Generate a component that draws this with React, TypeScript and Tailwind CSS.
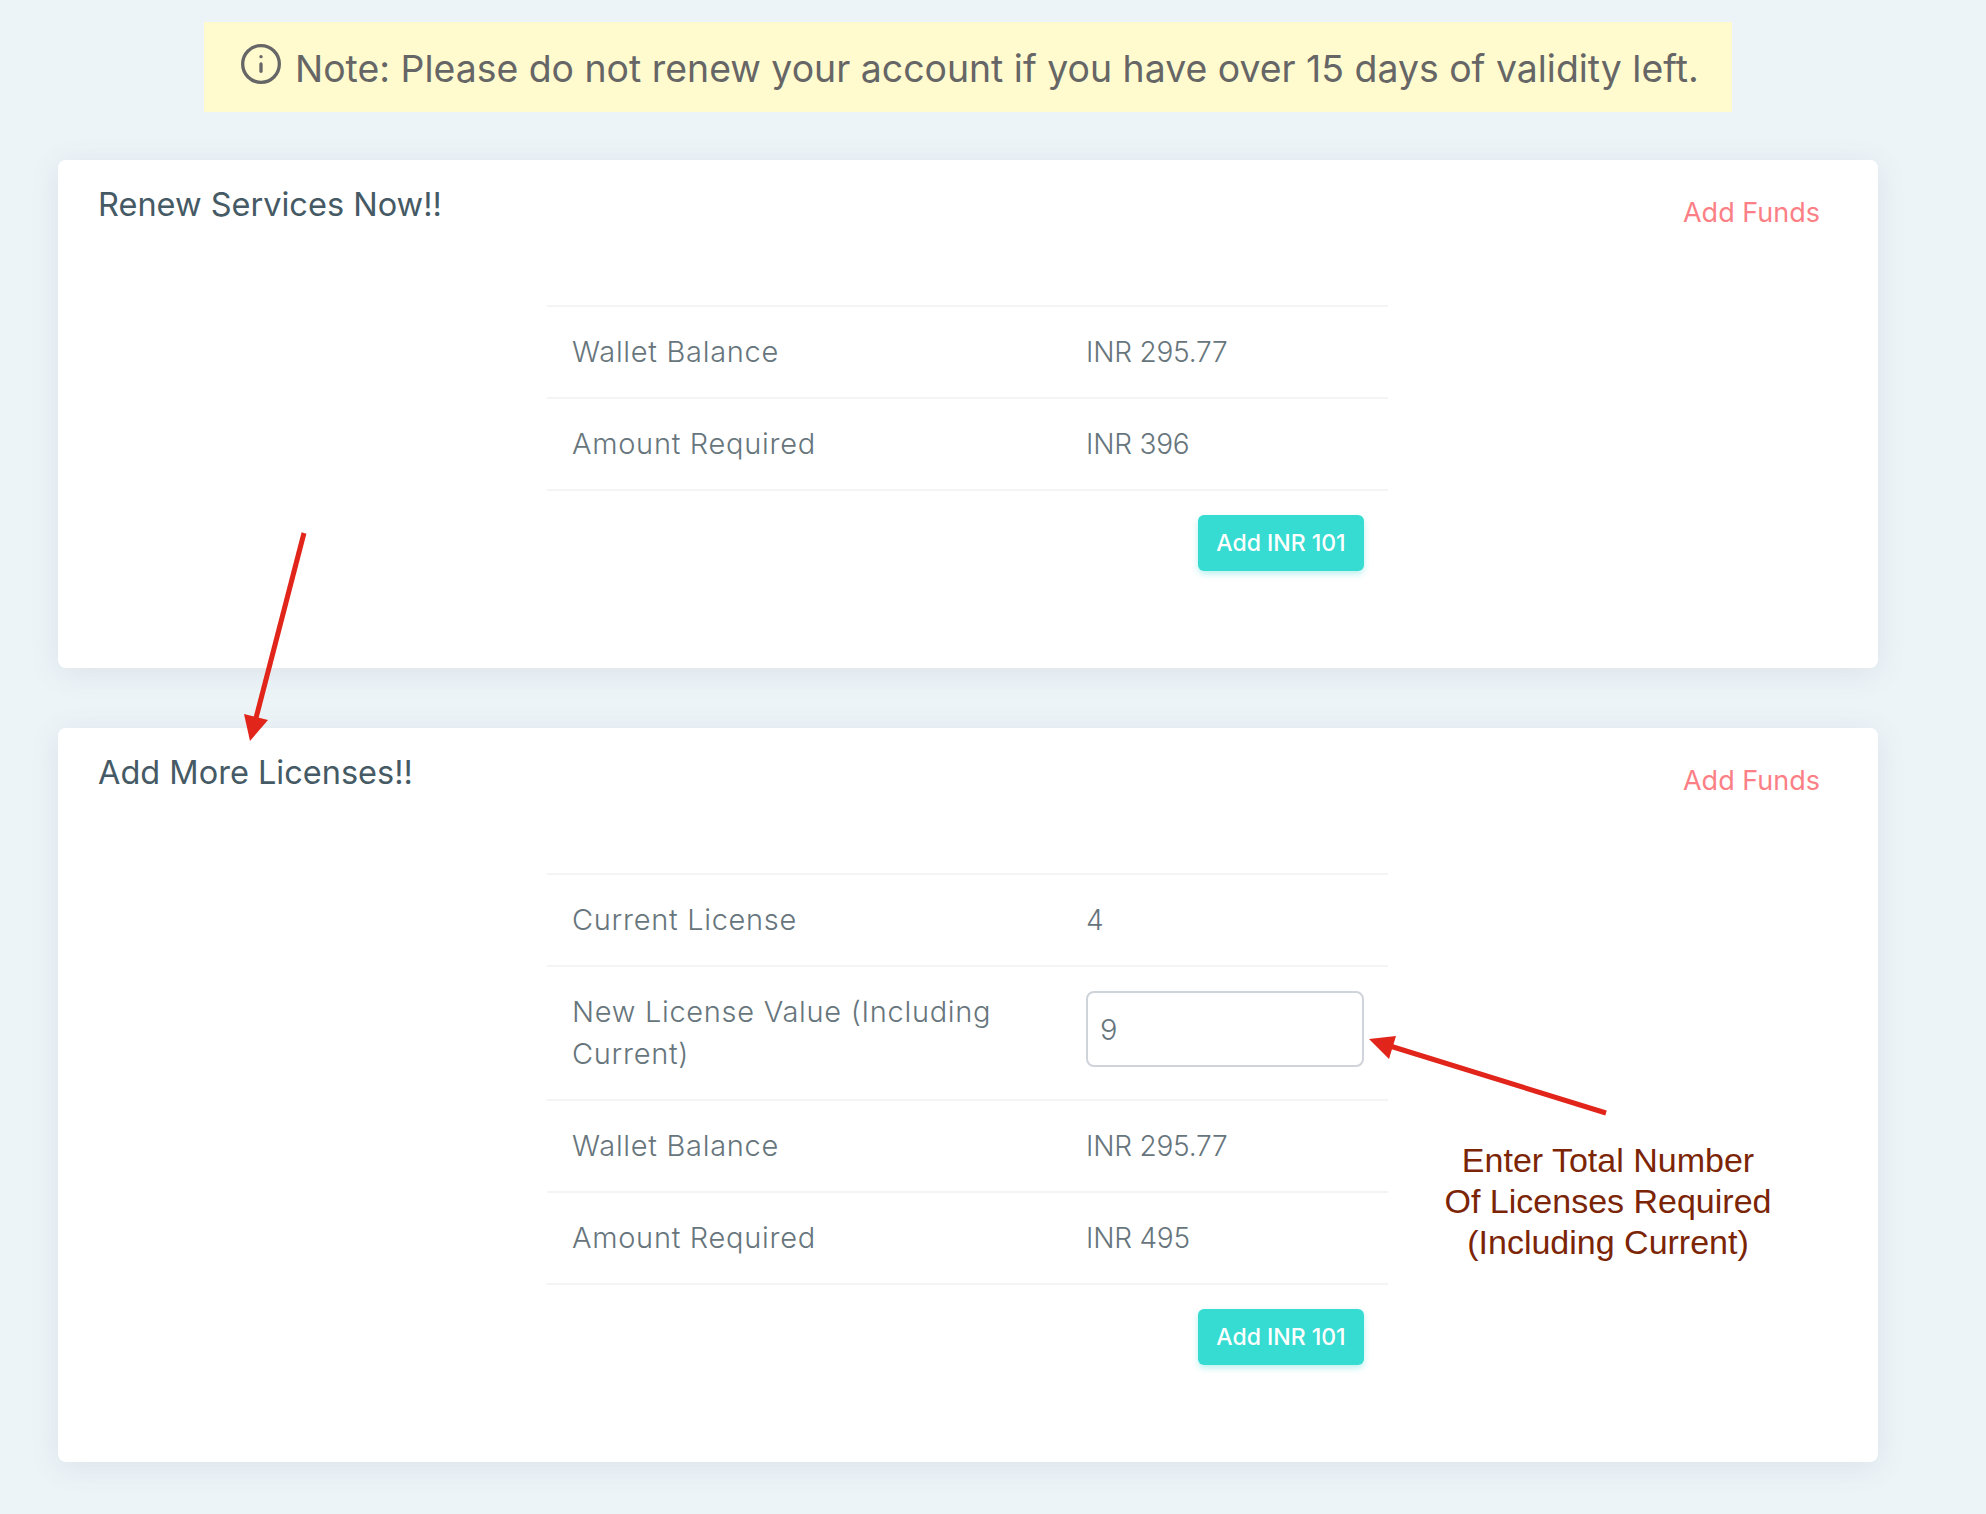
import { Info } from "lucide-react";

function Row({ label, value }: { label: string; value: React.ReactNode }) {
  return (
    <div className="grid grid-cols-[514px_1fr] border-b-2 border-[#f2f4f5] pr-[24px] pl-[25px] py-[24px] text-[28px] leading-[42px] font-light tracking-[-0.2px] text-[#67757c]">
      <div className="pr-[60px] text-[29px] tracking-[0.7px]">{label}</div>
      <div>{value}</div>
    </div>
  );
}

function Card({
  title,
  className,
  children,
}: {
  title: string;
  className: string;
  children: React.ReactNode;
}) {
  return (
    <section
      className={`ml-[58px] w-[1820px] rounded-[8px] bg-white shadow-[0_5px_30px_rgba(90,100,110,0.11)] ${className}`}
    >
      <div className="flex justify-between pr-[58px] pl-[40px] pt-[25px]">
        <h2 className="text-[32.5px] leading-[40px] font-normal text-[#455a64]">{title}</h2>
        <a className="mt-[8px] text-[27px] leading-[40px] text-[#fc7f86]">Add Funds</a>
      </div>
      <div className="mt-[72px] ml-[489px] w-[841px]">
        <div className="border-t-2 border-[#f2f4f5]">{children}</div>
        <div className="mt-[24px] flex justify-end pr-[24px]">
          <button className="h-[56px] w-[166px] rounded-[6px] bg-[#36dbd1] text-[23px] font-medium text-white shadow-[0_3px_6px_rgba(54,219,209,0.35)]">
            Add INR 101
          </button>
        </div>
      </div>
    </section>
  );
}

export default function App() {
  return (
    <div className="relative h-[1514px] w-[1986px] overflow-hidden bg-[#ecf4f8] pt-[22px] font-['Inter',sans-serif]">
      <div className="ml-[204px] flex h-[90px] w-[1528px] items-center gap-[12px] bg-[#fffbcf] pl-[35px] text-[37.4px] leading-[48px] text-[#666666]">
        <Info className="mb-[6px] shrink-0" size={44} strokeWidth={1.8} />
        <span className="mt-[4px] whitespace-nowrap">Note: Please do not renew your account if you have over 15 days of validity left.</span>
      </div>

      <Card title="Renew Services Now!!" className="mt-[48px] h-[508px]">
        <Row label="Wallet Balance" value="INR 295.77" />
        <Row label="Amount Required" value="INR 396" />
      </Card>

      <Card title="Add More Licenses!!" className="mt-[60px] h-[734px]">
        <Row label="Current License" value="4" />
        <Row
          label="New License Value (Including Current)"
          value={
            <input
              readOnly
              value="9"
              className="h-[76px] w-[278px] rounded-[8px] border-2 border-[#ced4da] bg-white px-[12px] text-[29px] font-light text-[#67757c] outline-none"
            />
          }
        />
        <Row label="Wallet Balance" value="INR 295.77" />
        <Row label="Amount Required" value="INR 495" />
      </Card>

      {/* annotations drawn on top of the screenshot */}
      <svg className="pointer-events-none absolute top-0 left-0" width="1986" height="1514">
        <line x1="304" y1="533" x2="256" y2="718" stroke="#e1251b" strokeWidth="5" />
        <polygon points="250,741 244,714 268,720" fill="#e1251b" />
        <line x1="1606" y1="1113" x2="1390" y2="1046" stroke="#e1251b" strokeWidth="5" />
        <polygon points="1369,1039 1396,1036 1389,1059" fill="#e1251b" />
      </svg>
      <div className="absolute top-[1140px] left-[1408px] w-[400px] text-center font-['Liberation_Sans',sans-serif] text-[34px] leading-[41px] text-[#7b2506]">
        Enter Total Number
        <br />
        Of Licenses Required
        <br />
        (Including Current)
      </div>
    </div>
  );
}
